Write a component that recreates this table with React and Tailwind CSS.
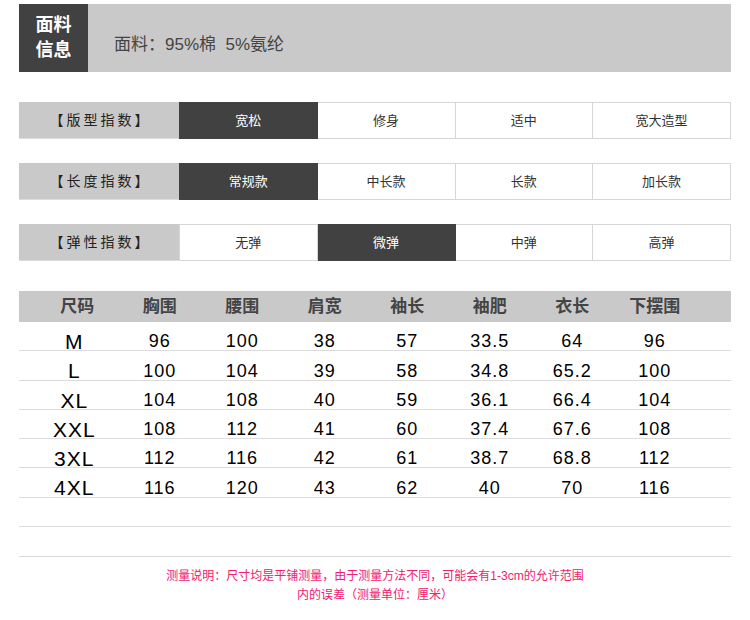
import React from 'react';

const cjk = { fontFamily: '"Liberation Sans", "Noto Sans CJK SC", sans-serif' };

const indexRows = [
  { label: '【版型指数】', options: ['宽松', '修身', '适中', '宽大造型'], active: 0 },
  { label: '【长度指数】', options: ['常规款', '中长款', '长款', '加长款'], active: 0 },
  { label: '【弹性指数】', options: ['无弹', '微弹', '中弹', '高弹'], active: 1 },
];

const headers = ['尺码', '胸围', '腰围', '肩宽', '袖长', '袖肥', '衣长', '下摆围'];

const sizes = [
  ['M', '96', '100', '38', '57', '33.5', '64', '96'],
  ['L', '100', '104', '39', '58', '34.8', '65.2', '100'],
  ['XL', '104', '108', '40', '59', '36.1', '66.4', '104'],
  ['XXL', '108', '112', '41', '60', '37.4', '67.6', '108'],
  ['3XL', '112', '116', '42', '61', '38.7', '68.8', '112'],
  ['4XL', '116', '120', '43', '62', '40', '70', '116'],
];

export default function App() {
  return (
    <div className="w-[750px] h-[620px] bg-white px-[19px] pt-[4px]" style={cjk}>
      {/* Fabric info */}
      <div className="flex h-[68px] bg-[#c9c9c9]">
        <div className="w-[69px] bg-[#414141] text-white text-[18px] font-bold leading-[25px] flex flex-col items-center justify-center">
          <span>面料</span>
          <span>信息</span>
        </div>
        <div className="flex items-center pl-[26px] pt-[14px] text-[17px] text-[#444]">
          面料：95%棉&nbsp;&nbsp;5%氨纶
        </div>
      </div>

      {/* Index rows */}
      <div className="mt-[30px] flex flex-col gap-[24px]">
        {indexRows.map((row) => (
          <div key={row.label} className="flex h-[37px]">
            <div className="w-[160px] bg-[#c9c9c9] border-b border-[#dcdcdc] flex items-center justify-center pl-[3px] text-[14px] tracking-[3px] text-[#222]">
              {row.label}
            </div>
            {row.options.map((opt, i) => (
              <div
                key={opt}
                className={`flex-1 flex items-center justify-center text-[13px] border ${
                  i === row.active
                    ? 'bg-[#414141] border-[#414141] text-white'
                    : 'bg-white border-[#d6d6d6] text-[#333]'
                } ${i > 0 ? 'border-l-0' : ''}`}
              >
                {opt}
              </div>
            ))}
          </div>
        ))}
      </div>

      {/* Size table */}
      <div className="mt-[30px]">
        <div className="h-[31px] bg-[#c9c9c9] pl-[17px] grid grid-cols-[repeat(8,82.5px)] items-center">
          {headers.map((h) => (
            <div key={h} className="text-center text-[17px] font-bold text-[#444]">
              {h}
            </div>
          ))}
        </div>
        {sizes.map((row) => (
          <div
            key={row[0]}
            className="h-[29.3px] border-b border-[#dcdcdc] pl-[17px] grid grid-cols-[repeat(8,82.5px)] items-center text-black"
          >
            {row.map((v, i) => (
              <div
                key={i}
                className={`text-center pt-[4px] ${
                  i === 0 ? 'text-[21px] tracking-[1px] pr-[6px]' : 'text-[18px] tracking-[1px]'
                }`}
              >
                {v}
              </div>
            ))}
          </div>
        ))}
        <div className="h-[29.5px] border-b border-[#dcdcdc]" />
        <div className="h-[30px] border-b border-[#dcdcdc]" />
      </div>

      {/* Note */}
      <div className="mt-[10px] text-center text-[12px] leading-[19px] text-[#f0206e]">
        <p>测量说明：尺寸均是平铺测量，由于测量方法不同，可能会有1-3cm的允许范围</p>
        <p>内的误差（测量单位：厘米）</p>
      </div>
    </div>
  );
}
